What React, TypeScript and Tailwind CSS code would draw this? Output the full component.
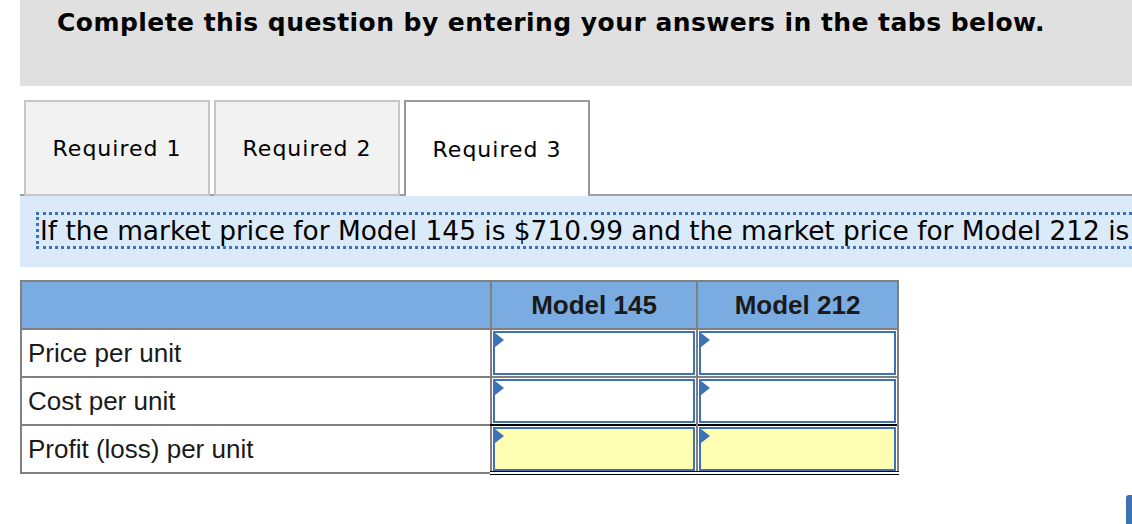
import React from "react";

const rows = ["Price per unit", "Cost per unit", "Profit (loss) per unit"];

function InputCell({ total }: { total?: boolean }) {
  return (
    <td
      className={
        "p-0 border-x-2 border-[#808080] " +
        (total ? "border-t-2 border-t-black border-b-[4px] border-b-black border-double" : "border-y-2 border-[#808080]")
      }
    >
      <div
        className={
          "relative h-[44px] mx-[1px] border-2 border-[#3d72b6] " +
          (total ? "bg-[#ffffb4]" : "bg-white")
        }
      >
        <svg className="absolute left-0 top-0" width="9" height="14" viewBox="0 0 9 14">
          <polygon points="0,0 9,7 0,14" fill="#3d72b6" />
        </svg>
      </div>
    </td>
  );
}

export default function App() {
  const tabs = ["Required 1", "Required 2", "Required 3"];
  const active = 2;

  return (
    <div className="w-[1132px] h-[524px] bg-white overflow-hidden flex flex-col">
      <div className="ml-[20px] h-[86px] shrink-0 bg-[#e0e0e0] pl-[37px] pt-[8px]">
        <h1
          className="text-[25px] leading-[30px] font-bold text-black whitespace-nowrap"
          style={{ fontFamily: "Verdana, 'DejaVu Sans', sans-serif", letterSpacing: "0.45px" }}
        >
          Complete this question by entering your answers in the tabs below.
        </h1>
      </div>

      <div className="mt-[14px] ml-[20px] pl-[4px] flex gap-[4px] border-b-2 border-[#a0a0a0] shrink-0">
        {tabs.map((t, i) => (
          <div
            key={t}
            className={
              "w-[186px] h-[96px] flex items-center justify-center text-[22px] text-black mb-[-2px] " +
              (i === active
                ? "bg-white border-2 border-b-0 border-[#9a9a9a]"
                : "bg-[#f2f2f2] border-2 border-[#c6c6c6]")
            }
            style={{ fontFamily: "Verdana, 'DejaVu Sans', sans-serif", letterSpacing: "1px" }}
          >
            {t}
          </div>
        ))}
      </div>

      <div className="ml-[20px] h-[71px] shrink-0 bg-[#daeaf8] pl-[16px] pt-[16px] overflow-hidden">
        <div
          className="inline-block whitespace-nowrap border-[3px] border-dotted border-[#3d72b6] pl-[1px] pr-[60px] h-[37px] leading-[32px] text-[26.4px] text-black"
          style={{ fontFamily: "Verdana, 'DejaVu Sans', sans-serif" }}
        >
          If the market price for Model 145 is $710.99 and the market price for Model 212 is
        </div>
      </div>

      <div className="mt-[13px] ml-[20px] shrink-0">
        <table
          className="border-collapse border-2 border-[#808080] text-[26px] text-[#1a1a1a]"
          style={{ fontFamily: "Arial, 'Liberation Sans', sans-serif" }}
        >
          <thead>
            <tr className="h-[48px] bg-[#7aace1]">
              <th className="w-[470px] border-2 border-[#808080]"></th>
              <th className="w-[206px] border-2 border-[#808080] font-bold text-center">Model 145</th>
              <th className="w-[201px] border-2 border-[#808080] font-bold text-center">Model 212</th>
            </tr>
          </thead>
          <tbody>
            {rows.map((r, i) => (
              <tr key={r} className="h-[48px]">
                <td className="border-2 border-[#808080] pl-[6px] text-left align-middle leading-[30px]">{r}</td>
                <InputCell total={i === 2} />
                <InputCell total={i === 2} />
              </tr>
            ))}
          </tbody>
        </table>
      </div>

      <div className="flex justify-end mt-[20px]">
        <div className="w-[6px] h-[32px] bg-[#3d72b6] rounded-tl-[3px]"></div>
      </div>
    </div>
  );
}
